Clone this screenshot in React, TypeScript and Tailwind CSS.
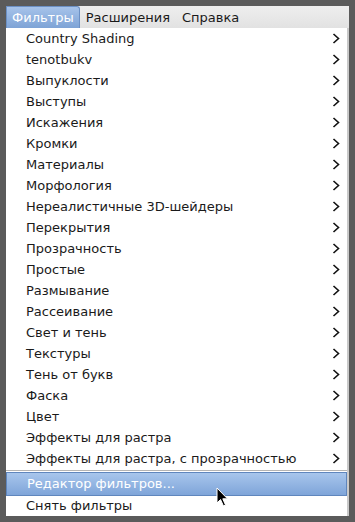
import React from 'react';

const ITEMS = [
    'Country Shading',
    'tenotbukv',
    'Выпуклости',
    'Выступы',
    'Искажения',
    'Кромки',
    'Материалы',
    'Морфология',
    'Нереалистичные 3D-шейдеры',
    'Перекрытия',
    'Прозрачность',
    'Простые',
    'Размывание',
    'Рассеивание',
    'Свет и тень',
    'Текстуры',
    'Тень от букв',
    'Фаска',
    'Цвет',
    'Эффекты для растра',
    'Эффекты для растра, с прозрачностью',
];

const Chevron = () => (
    <svg width="8" height="11" viewBox="0 0 8 11" className="shrink-0">
        <path d="M1.5 1 L6.5 5.5 L1.5 10" fill="none" stroke="#111" strokeWidth="1.6" />
    </svg>
);

const Cursor = () => (
    <svg width="14" height="20" viewBox="0 0 14 20" className="absolute left-[216px] top-[487px]">
        <path d="M1 1 L1 16 L4.5 12.5 L7.5 19 L9.5 18 L6.8 11.8 L11.5 11.8 Z" fill="#000" stroke="#fff" strokeWidth="1" strokeLinejoin="round" />
    </svg>
);

export default function App() {
    return (
        <div className="relative w-[355px] h-[522px] bg-[#5b5b5b] pt-[6px] pl-[6px] font-['DejaVu_Sans',sans-serif] text-[13px] leading-none text-[#1a1a1a]">
            <div className="w-[343px] flex flex-col">
                {/* menubar */}
                <div className="flex h-[22px] items-stretch bg-gradient-to-b from-[#eeeeee] to-[#e2e2e2]">
                    <div className="flex items-center pl-[5px] pr-[5px] rounded-tr-[3px] bg-gradient-to-b from-[#a6c3ea] to-[#7ea3d6] border border-[#6c90c4] border-b-0 text-white">
                        Фильтры
                    </div>
                    <div className="flex items-center pl-[6px] pr-[6px]">Расширения</div>
                    <div className="flex items-center pl-[6px]">Справка</div>
                </div>
                {/* menu */}
                <div className="bg-white border-r-2 border-[#c9c9c9] h-[488px] flex flex-col">
                    {ITEMS.map((label) => (
                        <div key={label} className="h-[21px] flex items-center justify-between pl-[20px] pr-[7px] pt-px">
                            <span>{label}</span>
                            <Chevron />
                        </div>
                    ))}
                    <div className="h-[4px] flex items-center">
                        <div className="w-full h-px bg-[#b4b4b4]" />
                    </div>
                    <div className="h-[24px] flex items-center pl-[20px] bg-gradient-to-b from-[#a8c6ec] to-[#7fa5d9] border border-[#5f86bd] text-white">
                        Редактор фильтров...
                    </div>
                    <div className="h-[20px] flex items-center pl-[20px]">Снять фильтры</div>
                </div>
            </div>
            <Cursor />
        </div>
    );
}
